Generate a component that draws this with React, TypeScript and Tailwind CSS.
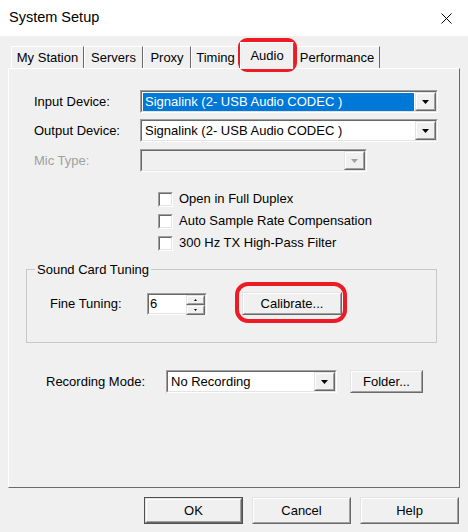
import React from 'react';

const Arrow = ({ color = '#000' }: { color?: string }) => (
    <svg width="7" height="4" viewBox="0 0 7 4">
        <path d="M0 0h7L3.5 4z" fill={color} />
    </svg>
);

const Sunken = ({ className = '', inner = '', children }: { className?: string; inner?: string; children?: React.ReactNode }) => (
    <div className={`shrink-0 border border-t-[#a0a0a0] border-l-[#a0a0a0] border-r-white border-b-white ${className}`}>
        <div className={`h-full border border-t-[#696969] border-l-[#696969] border-r-[#e3e3e3] border-b-[#e3e3e3] ${inner}`}>
            {children}
        </div>
    </div>
);

const Raised = ({ className = '', inner = '', children }: { className?: string; inner?: string; children?: React.ReactNode }) => (
    <div className={`shrink-0 border border-t-[#e3e3e3] border-l-[#e3e3e3] border-r-[#696969] border-b-[#696969] ${className}`}>
        <div className={`h-full border border-t-white border-l-white border-r-[#a0a0a0] border-b-[#a0a0a0] bg-[#f0f0f0] flex items-center justify-center ${inner}`}>
            {children}
        </div>
    </div>
);

const Combo = ({ text, width, selected = false, disabled = false }: { text: string; width: string; selected?: boolean; disabled?: boolean }) => (
    <Sunken className={`h-[23px] ${width}`} inner={`flex ${disabled ? 'bg-[#f0f0f0]' : 'bg-white'}`}>
        <div className="flex-1 flex items-center px-[1px] min-w-0">
            {text && (
                <span className={`h-[18px] flex items-center pl-[2px] w-full whitespace-nowrap ${selected ? 'bg-[#0078d7] text-white' : 'text-black'}`}>
                    {text}
                </span>
            )}
        </div>
        <Raised className="w-[21px] h-full">
            <Arrow color={disabled ? '#a0a0a0' : '#000'} />
        </Raised>
    </Sunken>
);

const Check = ({ label }: { label: string }) => (
    <div className="h-[22px] flex items-center">
        <Sunken className="w-[15px] h-[15px] ml-[149px]" inner="bg-white" />
        <span className="ml-[6px]">{label}</span>
    </div>
);

const Tab = ({ label, width, active = false }: { label: string; width: string; active?: boolean }) => (
    <div
        className={`shrink-0 flex items-center justify-center border-t border-l border-r border-t-white border-l-white border-r-[#696969] ${width} ${
            active ? 'h-[27px] -mb-[1px] bg-[#f0f0f0] relative z-10' : 'h-[22px]'
        }`}
    >
        {label}
    </div>
);

export default function App() {
    return (
        <div className="w-[468px] h-[532px] bg-[#f0f0f0] text-black text-[13px] font-['Liberation_Sans',Arial,sans-serif] relative overflow-hidden">
            {/* title bar */}
            <div className="h-[36px] bg-white flex items-center justify-between pl-[9px] pr-[16px]">
                <span className="text-[14.5px]">System Setup</span>
                <svg width="11" height="11" viewBox="0 0 11 11">
                    <path d="M0.5 0.5l10 10M10.5 0.5l-10 10" stroke="#000" strokeWidth="1" />
                </svg>
            </div>

            {/* tabs */}
            <div className="h-[32px] flex items-end pl-[11px]">
                <Tab label="My Station" width="w-[73px]" />
                <Tab label="Servers" width="w-[59px]" />
                <Tab label="Proxy" width="w-[48px]" />
                <Tab label="Timing" width="w-[49px]" />
                <Tab label="Audio" width="w-[54px]" active />
                <Tab label="Performance" width="w-[86px]" />
            </div>

            {/* panel */}
            <div className="ml-[8px] w-[452px] h-[420px] border border-t-white border-l-white border-r-[#696969] border-b-[#696969] flex flex-col">
                <div className="flex items-center mt-[21px] h-[23px]">
                    <span className="shrink-0 w-[131px] pl-[25px]">Input Device:</span>
                    <Combo text="Signalink (2- USB Audio CODEC )" width="w-[298px]" selected />
                </div>
                <div className="flex items-center mt-[6px] h-[23px]">
                    <span className="shrink-0 w-[131px] pl-[25px]">Output Device:</span>
                    <Combo text="Signalink (2- USB Audio CODEC )" width="w-[298px]" />
                </div>
                <div className="flex items-center mt-[7px] h-[23px]">
                    <span className="shrink-0 w-[131px] pl-[25px] text-[#a0a0a0]">Mic Type:</span>
                    <Combo text="" width="w-[227px]" disabled />
                </div>

                <div className="mt-[16px] flex flex-col">
                    <Check label="Open in Full Duplex" />
                    <Check label="Auto Sample Rate Compensation" />
                    <Check label="300 Hz TX High-Pass Filter" />
                </div>

                <fieldset className="ml-[17px] mt-[8px] w-[411px] h-[81px] border border-[#c8c8c8] px-0">
                    <legend className="ml-[8px] px-[2px] leading-[15px]">Sound Card Tuning</legend>
                    <div className="flex items-center mt-[15px] h-[23px]">
                        <span className="shrink-0 pl-[23px] w-[120px]">Fine Tuning:</span>
                        <Sunken className="w-[60px] h-[22px]" inner="bg-white flex">
                            <span className="flex-1 pl-[1px] leading-[18px]">6</span>
                            <div className="w-[19px] flex flex-col">
                                <Raised className="h-[10px]">
                                    <svg width="3" height="2" viewBox="0 0 3 2"><path d="M1.5 0L3 2H0z" fill="#000" /></svg>
                                </Raised>
                                <Raised className="h-[10px]">
                                    <svg width="3" height="2" viewBox="0 0 3 2"><path d="M0 0h3L1.5 2z" fill="#000" /></svg>
                                </Raised>
                            </div>
                        </Sunken>
                        <Raised className="ml-[35px] w-[100px] h-[23px]">Calibrate...</Raised>
                    </div>
                </fieldset>

                <div className="flex items-center mt-[27px] h-[23px]">
                    <span className="shrink-0 pl-[37px] w-[157px]">Recording Mode:</span>
                    <Combo text="No Recording" width="w-[171px]" />
                    <Raised className="ml-[13px] w-[73px] h-[23px]">Folder...</Raised>
                </div>
            </div>

            {/* bottom buttons */}
            <div className="flex justify-end gap-[9px] pr-[9px] mt-[9px]">
                <div className="border border-[#505050]">
                    <Raised className="w-[97px] h-[25px]">OK</Raised>
                </div>
                <Raised className="w-[99px] h-[27px]">Cancel</Raised>
                <Raised className="w-[99px] h-[27px]">Help</Raised>
            </div>

            {/* red annotation marks */}
            <div className="absolute left-[238px] top-[38px] w-[59px] h-[34px] border-[4px] border-[#ed1c24] rounded-[9px] pointer-events-none" />
            <div className="absolute left-[235px] top-[282px] w-[112px] h-[41px] border-[4px] border-[#ed1c24] rounded-[13px] pointer-events-none" />
        </div>
    );
}
